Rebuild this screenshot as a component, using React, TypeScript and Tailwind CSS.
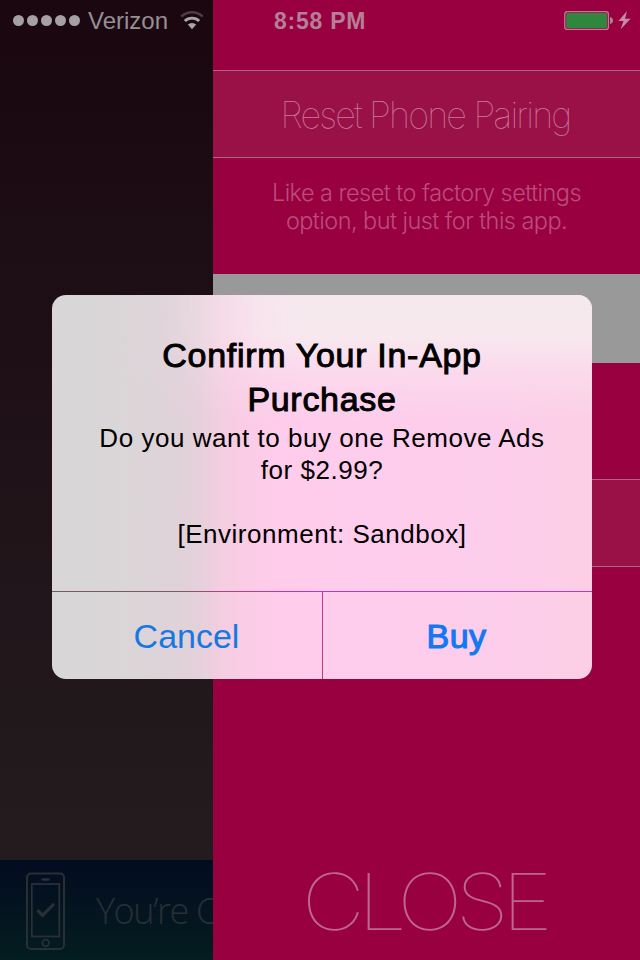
import React from "react";

const helv = "font-['Liberation_Sans',Arial,sans-serif]";

function StatusBar() {
  return (
    <div className="absolute inset-x-0 top-0 flex h-10 items-center text-[#9f8a96]">
      <div className="ml-[13px] flex w-[67px] justify-between">
        {[0, 1, 2, 3, 4].map((i) => (
          <span key={i} className="size-[11px] rounded-full bg-[#a5a0a3]" />
        ))}
      </div>
      <span className="ml-[8px] w-[90px] whitespace-nowrap pt-[2px] text-[24px] text-[#968f94]">Verizon</span>
      <svg className="mt-px ml-px w-[26px]" viewBox="0 0 26 20" height="20" fill="none">
        <path d="M2.300 5.600a15.500 15.500 0 0 1 21.400 0" stroke="#4b3d45" strokeWidth="2.600" />
        <path d="M5.800 10a10.400 10.400 0 0 1 14.400 0" stroke="#aaa5a8" strokeWidth="2.800" />
        <path d="M13 18.200 8.800 13.600a6.200 6.200 0 0 1 8.400 0z" fill="#aaa5a8" />
      </svg>
      <span className="ml-[69px] w-[100px] whitespace-nowrap pt-[2px] text-[23px] font-bold tracking-[0.75px] text-[#b57f99]">8:58 PM</span>
      <svg className="ml-[189px]" width="70" height="24" viewBox="0 0 70 24">
        <rect x="1.800" y="3.600" width="43.600" height="17.800" rx="2.500" fill="none" stroke="#c07a9b" strokeWidth="1.300" />
        <rect x="3.200" y="5" width="40.800" height="15" rx="1" fill="#2e873c" />
        <path d="M47 9c4 .4 4 6.600 0 7z" fill="#b57f99" />
        <path d="M64 3 55.500 13h5L57.500 21.500 67.500 10.800h-5.500z" fill="#c58ca7" />
      </svg>
    </div>
  );
}

function AppBehind() {
  return (
    <div className="flex w-[213px] shrink-0 flex-col overflow-hidden">
      <div className="h-[860px] bg-linear-to-b from-[#1a0710] to-[#231c1f]" />
      <div className="flex h-[100px] bg-linear-to-b from-[#030b20] via-[#041420] to-[#031d20] text-[#282f35]">
        <svg className="ml-[25px] mt-3 shrink-0" width="41" height="79" viewBox="0 0 41 79" fill="none" stroke="currentColor">
          <rect x="2" y="1.500" width="37" height="75.500" rx="4" strokeWidth="2" />
          <rect x="6.800" y="12" width="27.500" height="52.500" strokeWidth="1.800" />
          <path d="M17.500 7.500h6" strokeWidth="2.400" strokeLinecap="round" />
          <circle cx="20.700" cy="71" r="3.300" strokeWidth="1.800" />
          <path d="m12.500 38 5 5.300L29 31.800" strokeWidth="3.300" />
        </svg>
        <span className="ml-[30px] mt-[27px] whitespace-nowrap font-['Open_Sans',sans-serif] text-[36px] font-light leading-[48px] tracking-[-1.4px]">
          You’re C
        </span>
      </div>
    </div>
  );
}

function Settings() {
  return (
    <div className="flex w-[427px] flex-col bg-[#99003f] text-center">
      <div className="mt-[70px] h-[88px] border-y border-[#ae6487] bg-[#991147] pr-[2px] font-['Inter',sans-serif] text-[36px] font-thin leading-[88px] tracking-[-1.85px] text-[#cb7da0]">
        Reset Phone Pairing
      </div>
      <p className="mt-[21px] h-[95px] whitespace-nowrap font-['Inter',sans-serif] text-[23.500px] font-light leading-7 tracking-[-0.550px] text-[#b94d7b]">
        Like a reset to factory settings
        <br />
        option, but just for this app.
      </p>
      <div className="h-[89px] bg-[#999999]" />
      <div className="mt-[116px] h-[88px] border-y border-[#ae6487] bg-[#991147]" />
      <div className="mt-[285px] scale-x-[1.12] whitespace-nowrap pr-[5px] font-['Inter',sans-serif] text-[78px] font-thin leading-[100px] tracking-[-6.4px] text-[#bd6690]">
        CLOSE
      </div>
    </div>
  );
}

function Alert() {
  return (
    <div className="absolute left-[52px] top-[295px] flex h-[384px] w-[540px] flex-col overflow-hidden rounded-[14px] bg-[linear-gradient(90deg,#d8d6d6_0%,#dad6d8_12%,#ddd3d8_20%,#e4d0da_27%,#f2cee0_31%,#facce5_35%,#ffccec_43%,#fdcdec_82%,#fccfe5_100%)] text-center">
      <div className="absolute inset-x-0 top-0 h-[130px] bg-[linear-gradient(180deg,#f5e9ee_0%,#f7e8ee_30%,#f9e1ed99_60%,#ffccec00_100%)] [mask-image:linear-gradient(90deg,transparent_12%,#0002_22%,#0008_32%,#000d_39%,black_47%)]" />
      <div className="relative flex h-[296px] flex-col items-center text-black">
        <h1 className="mt-[38px] whitespace-nowrap text-[34px] font-normal leading-[44px] tracking-[0.7px] [-webkit-text-stroke:1px_black]">
          Confirm Your In-App
          <br />
          Purchase
        </h1>
        <p className="mt-px whitespace-nowrap text-[26px] leading-8 tracking-[0.530px]">
          Do you want to buy one Remove Ads
          <br />
          for $2.99?
          <br />
          <br />
          [Environment: Sandbox]
        </p>
      </div>
      <div className="relative h-px bg-[linear-gradient(90deg,#6c5d65_0%,#80586b_24%,#bd3b87_33%,#c236a5_50%,#c438ac_100%)]" />
      <div className="relative flex h-[87px] text-[34px] leading-[88px] text-[#1679e2]">
        <div className="w-[269px]">Cancel</div>
        <div className="ml-px w-px bg-linear-to-b from-[#bd36a8] to-[#bd397e]" />
        <div className="w-[267px] tracking-[0.4px] text-[#1379f3] [-webkit-text-stroke:1.200px_#1379f3]">Buy</div>
      </div>
    </div>
  );
}

export default function App() {
  return (
    <div className={`relative flex h-[960px] w-[640px] overflow-hidden ${helv}`}>
      <AppBehind />
      <Settings />
      <StatusBar />
      <Alert />
    </div>
  );
}
